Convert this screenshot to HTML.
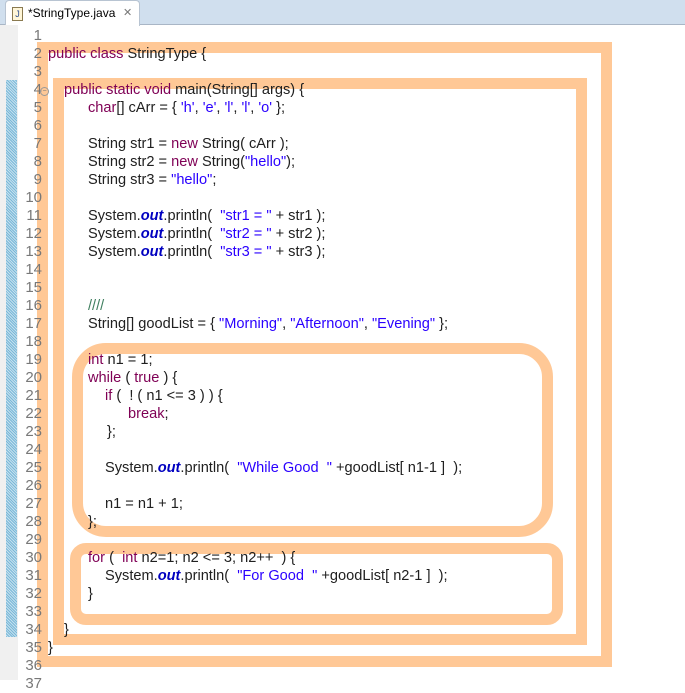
<!DOCTYPE html>
<html><head><meta charset="utf-8"><style>
body{margin:0;width:685px;height:680px;overflow:hidden;background:#fff;position:relative;font-family:"Liberation Sans",sans-serif;}
.tabbar{position:absolute;left:0;top:0;width:685px;height:24px;background:#d0dfee;border-bottom:1px solid #a9b6c6;}
.tab{position:absolute;left:5px;top:0;width:133px;height:25px;background:#fff;border:1px solid #b8c4d2;border-bottom:none;border-radius:4px 4px 0 0;font-size:12px;line-height:25px;}
.gut{position:absolute;left:0;top:25px;width:18px;height:655px;background:#f0f0f0;}
.chg{position:absolute;left:6px;top:80px;width:11px;height:557px;background:repeating-linear-gradient(45deg,#7ab8d8 0 1px,#c4e0ee 1px 2px);}
.ln{position:absolute;left:16px;width:26px;text-align:right;color:#787878;font-size:15px;line-height:18px;}
.c{position:absolute;font-size:14.6px;line-height:18px;color:#202020;white-space:pre;}
.k{color:#7f0055}.s{color:#2a00ff}.o{color:#0000c0;font-style:italic;font-weight:bold}.m{color:#3f7f5f}
.box{position:absolute;border:11px solid #ffc896;box-sizing:border-box;}
</style></head><body>
<div class="tabbar"></div>
<div class="tab"><span style="position:absolute;left:6px;top:6px;width:9px;height:12px;border:1px solid #8a7a50;background:#fff6d8;font-size:9px;line-height:12px;text-align:center;color:#305090">J</span><span style="position:absolute;left:22px">*StringType.java</span><span style="position:absolute;left:117px;color:#777;font-size:11px">✕</span></div>
<div class="gut"></div><div class="chg"></div>
<div class="box" style="left:37px;top:42px;width:575px;height:625px"></div>
<div class="box" style="left:53px;top:78px;width:534px;height:567px"></div>
<div class="box" style="left:72px;top:343px;width:481px;height:194px;border-radius:34px"></div>
<div class="box" style="left:70px;top:543px;width:493px;height:82px;border-radius:16px"></div>
<div id="L"></div>
<script>
var nums='';for(var i=1;i<=37;i++){nums+='<div class="ln" style="top:'+(27+(i-1)*18)+'px">'+i+'</div>';}
var code={
2:[48,'<span class="k">public class</span> StringType {'],
4:[64,'<span class="k">public static void</span> main(String[] args) {'],
5:[88,'<span class="k">char</span>[] cArr = { <span class="s">\'h\'</span>, <span class="s">\'e\'</span>, <span class="s">\'l\'</span>, <span class="s">\'l\'</span>, <span class="s">\'o\'</span> };'],
7:[88,'String str1 = <span class="k">new</span> String( cArr );'],
8:[88,'String str2 = <span class="k">new</span> String(<span class="s">"hello"</span>);'],
9:[88,'String str3 = <span class="s">"hello"</span>;'],
11:[88,'System.<span class="o">out</span>.println(  <span class="s">"str1 = "</span> + str1 );'],
12:[88,'System.<span class="o">out</span>.println(  <span class="s">"str2 = "</span> + str2 );'],
13:[88,'System.<span class="o">out</span>.println(  <span class="s">"str3 = "</span> + str3 );'],
16:[88,'<span class="m">////</span>'],
17:[88,'String[] goodList = { <span class="s">"Morning"</span>, <span class="s">"Afternoon"</span>, <span class="s">"Evening"</span> };'],
19:[88,'<span class="k">int</span> n1 = 1;'],
20:[88,'<span class="k">while</span> ( <span class="k">true</span> ) {'],
21:[105,'<span class="k">if</span> (  ! ( n1 &lt;= 3 ) ) {'],
22:[128,'<span class="k">break</span>;'],
23:[107,'};'],
25:[105,'System.<span class="o">out</span>.println(  <span class="s">"While Good  "</span> +goodList[ n1-1 ]  );'],
27:[105,'n1 = n1 + 1;'],
28:[88,'};'],
30:[88,'<span class="k">for</span> (  <span class="k">int</span> n2=1; n2 &lt;= 3; n2++  ) {'],
31:[105,'System.<span class="o">out</span>.println(  <span class="s">"For Good  "</span> +goodList[ n2-1 ]  );'],
32:[88,'}'],
34:[64,'}'],
35:[48,'}']};
for(var n in code){nums+='<div class="c" style="left:'+code[n][0]+'px;top:'+(27+(n-1)*18)+'px">'+code[n][1]+'</div>';}
document.getElementById('L').innerHTML=nums;
</script>
<div style="position:absolute;left:40px;top:87px;width:7px;height:7px;border:1px solid #999;border-radius:50%;font-size:7px;line-height:7px;text-align:center;color:#777">−</div>
</body></html>
